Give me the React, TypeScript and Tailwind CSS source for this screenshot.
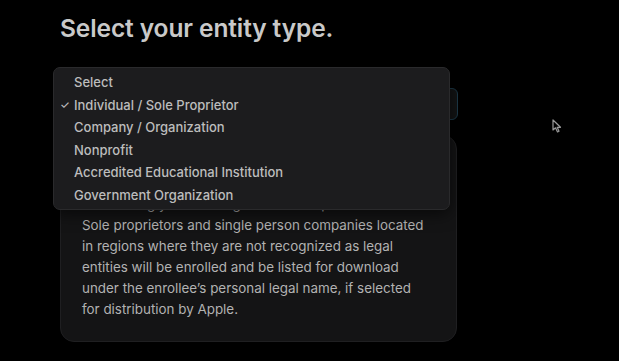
import React from 'react'

const options = [
  'Select',
  'Individual / Sole Proprietor',
  'Company / Organization',
  'Nonprofit',
  'Accredited Educational Institution',
  'Government Organization',
]

const lines = [
  'enroll using your own legal name and personal details.',
  'Sole proprietors and single person companies located',
  'in regions where they are not recognized as legal',
  'entities will be enrolled and be listed for download',
  'under the enrollee’s personal legal name, if selected',
  'for distribution by Apple.',
]

export default function App() {
  const selected = 'Individual / Sole Proprietor'

  return (
    <div
      className="relative w-[619px] h-[361px] overflow-hidden bg-black pl-[60px] pt-[12px]"
      style={{ fontFamily: 'Inter, "Noto Sans", sans-serif' }}
    >
      <h1 className="text-[24.5px] leading-[32px] font-semibold text-[#c9c9c9] tracking-[-0.1px]">
        Select your entity type.
      </h1>

      {/* select field, mostly covered by the open menu */}
      <div className="mt-[44px] w-[398px] h-[32px] rounded-[6px] border border-[#1d3a4a] bg-[#131415]" />

      {/* description card */}
      <div className="mt-[15px] w-[397px] h-[207px] rounded-[14px] border border-[#1f1f21] bg-[#141415] px-[21px] pt-[58px]">
        {lines.map((l) => (
          <p key={l} className="text-[13.4px] leading-[21px] text-[#b2b2b2] whitespace-nowrap">
            {l}
          </p>
        ))}
      </div>

      {/* open dropdown menu */}
      <div className="absolute left-[53px] top-[67px] w-[397px] h-[143px] rounded-[7px] border border-[#2a2a2c] bg-[#1c1c1e] pt-[3px] shadow-[0_4px_16px_rgba(0,0,0,0.6)]">
        {options.map((o) => (
          <div key={o} className="relative h-[22.5px] pl-[20px] text-[13px] leading-[22.5px] font-medium text-[#bdbdbd]">
            {o === selected && (
              <span className="absolute left-[6px] top-0 text-[11px] text-[#bdbdbd]">✓</span>
            )}
            {o}
          </div>
        ))}
      </div>

      {/* mouse pointer */}
      <svg className="absolute left-[552px] top-[119px]" width="10" height="15" viewBox="0 0 10 15">
        <path d="M1 1 L1 11 L3.5 8.8 L5.5 13 L7 12.3 L5.2 8.3 L8.5 8.3 Z" fill="#000" stroke="#9a9a9a" strokeWidth="1.2" strokeLinejoin="round" />
      </svg>
    </div>
  )
}
